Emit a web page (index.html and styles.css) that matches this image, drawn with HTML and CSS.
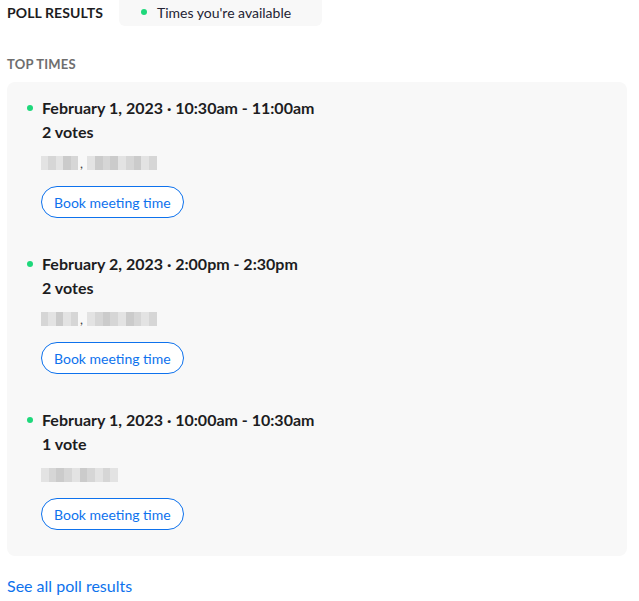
FILE: index.html
```html
<!DOCTYPE html>
<html>
<head>
<meta charset="utf-8">
<link rel="stylesheet" href="styles.css">
</head>
<body>
<div class="page">
  <div class="header">
    <div class="heading">POLL RESULTS</div>
    <div class="legend"><span class="dot"></span>Times you're available</div>
  </div>
  <div class="section-title">TOP TIMES</div>
  <div class="card">
    <div class="item">
      <div class="title"><span class="dot"></span>February 1, 2023 · 10:30am - 11:00am</div>
      <div class="votes">2 votes</div>
      <div class="names">
        <span class="blur w37"><i class="c1"></i><i class="c2"></i><i class="c1"></i><i class="c3"></i><i class="c2"></i></span><span class="comma">,</span>
        <span class="blur w70"><i class="c1"></i><i class="c3"></i><i class="c2"></i><i class="c3"></i><i class="c1"></i><i class="c2"></i><i class="c3"></i><i class="c1"></i><i class="c2"></i></span>
      </div>
      <button class="book">Book meeting time</button>
    </div>
    <div class="item">
      <div class="title"><span class="dot"></span>February 2, 2023 · 2:00pm - 2:30pm</div>
      <div class="votes">2 votes</div>
      <div class="names">
        <span class="blur w37"><i class="c2"></i><i class="c1"></i><i class="c3"></i><i class="c1"></i><i class="c2"></i></span><span class="comma">,</span>
        <span class="blur w70"><i class="c1"></i><i class="c2"></i><i class="c3"></i><i class="c2"></i><i class="c1"></i><i class="c3"></i><i class="c2"></i><i class="c1"></i><i class="c2"></i></span>
      </div>
      <button class="book">Book meeting time</button>
    </div>
    <div class="item">
      <div class="title"><span class="dot"></span>February 1, 2023 · 10:00am - 10:30am</div>
      <div class="votes">1 vote</div>
      <div class="names">
        <span class="blur w77"><i class="c1"></i><i class="c2"></i><i class="c3"></i><i class="c2"></i><i class="c1"></i><i class="c3"></i><i class="c2"></i><i class="c1"></i><i class="c2"></i><i class="c1"></i></span>
      </div>
      <button class="book">Book meeting time</button>
    </div>
  </div>
  <a class="see-all" href="#">See all poll results</a>
</div>
</body>
</html>
```
FILE: styles.css
```css
html, body {
  margin: 0;
  padding: 0;
  background: #ffffff;
}
body {
  font-family: Lato, "Open Sans", "Liberation Sans", sans-serif;
  color: #1d1d1f;
  -webkit-font-smoothing: antialiased;
}
.page {
  padding: 0 12px 0 7px;
  width: 620px;
}
.header {
  display: flex;
  align-items: center;
  height: 27px;
  margin-top: -3px;
  padding-top: 3px;
  box-sizing: border-box;
  gap: 16px;
}
.heading {
  font-size: 14px;
  font-weight: 700;
  letter-spacing: 0.1px;
  color: #1d1d1f;
}
.legend {
  display: flex;
  align-items: center;
  background: #f8f8f8;
  border-radius: 0 0 6px 6px;
  height: 30px;
  margin-top: -3px;
  width: 203px;
  box-sizing: border-box;
  padding-left: 22px;
  font-size: 14px;
  color: #232333;
  gap: 10px;
  padding-top: 3px;
}
.dot {
  width: 6px;
  height: 6px;
  border-radius: 50%;
  background: #1ed87b;
  display: inline-block;
  flex: none;
}
.section-title {
  margin-top: 27px;
  font-size: 13px;
  font-weight: 700;
  color: #6e6e6e;
  line-height: 18px;
  letter-spacing: 0.2px;
  position: relative;
  top: 4px;
}
.card {
  margin-top: 13px;
  background: #f8f8f8;
  border-radius: 8px;
  padding: 15px 0 26px 20px;
  display: flex;
  flex-direction: column;
  gap: 35px;
}
.title {
  display: flex;
  align-items: center;
  gap: 9px;
  font-size: 16px;
  font-weight: 700;
  line-height: 22px;
  color: #1d1d1f;
}
.votes {
  margin-top: 2px;
  font-size: 16px;
  font-weight: 700;
  line-height: 22px;
  padding-left: 15px;
}
.names {
  margin-top: 13px;
  padding-left: 14px;
  display: flex;
  align-items: flex-end;
  height: 14px;
}
.blur {
  display: flex;
  height: 14px;
}
.blur i {
  flex: 1;
  display: block;
  height: 100%;
}
.c1 { background: #e3e3e3; }
.c2 { background: #d6d6d6; }
.c3 { background: #cbcbcb; }
.w37 { width: 37px; }
.w70 { width: 70px; }
.w77 { width: 77px; }
.comma {
  font-size: 13px;
  color: #444;
  line-height: 14px;
  margin: 0 4px 0 2px;
}
.book {
  margin-top: 16px;
  margin-left: 14px;
  height: 32px;
  padding: 0 12px;
  border: 1px solid #0e72ed;
  border-radius: 16px;
  background: #ffffff;
  color: #0e72ed;
  font-family: inherit;
  font-size: 14px;
  display: block;
}
.see-all {
  display: block;
  margin-top: 20px;
  font-size: 16px;
  line-height: 20px;
  color: #0e72ed;
  text-decoration: none;
}
```
